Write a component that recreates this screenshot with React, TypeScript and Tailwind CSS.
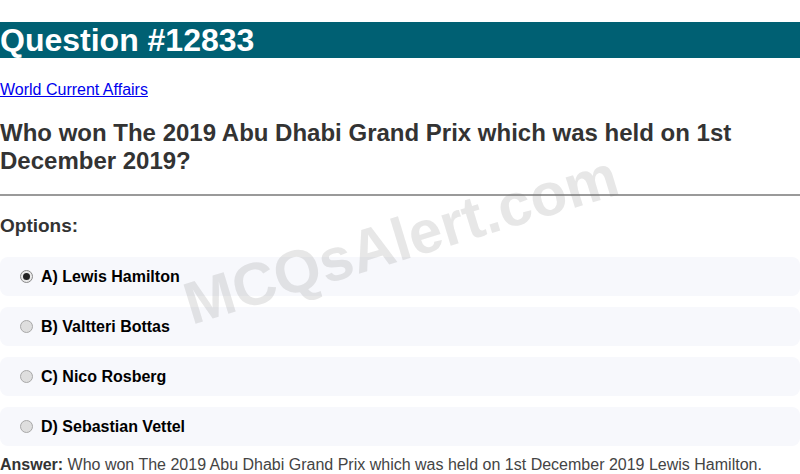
const options = [
  { label: 'A) Lewis Hamilton', checked: true },
  { label: 'B) Valtteri Bottas', checked: false },
  { label: 'C) Nico Rosberg', checked: false },
  { label: 'D) Sebastian Vettel', checked: false },
]

function Radio({ checked }: { checked: boolean }) {
  if (checked) {
    return (
      <span className="w-[13px] h-[13px] rounded-full border border-[#8a8a8a] bg-[#e9e9e9] flex items-center justify-center shrink-0">
        <span className="w-[7px] h-[7px] rounded-full bg-[#222]" />
      </span>
    )
  }
  return <span className="w-[13px] h-[13px] rounded-full border border-[#a8a8a8] bg-[#dedede] shrink-0" />
}

export default function App() {
  return (
    <div className="relative w-[800px] h-[474px] overflow-hidden bg-white font-['Liberation_Sans',Arial,sans-serif]">
      {/* Title band */}
      <h1 className="mt-[22px] h-[36px] bg-[#006073] text-white text-[32px] font-bold leading-[36px]">
        Question #12833
      </h1>

      <div className="mt-[23px] h-[18px] text-[16px] leading-[18px]">
        <a href="#" className="text-[#0000ee] underline">World Current Affairs</a>
      </div>

      <h2 className="mt-[20px] text-[24px] leading-[28px] font-bold text-[#333]">
        Who won The 2019 Abu Dhabi Grand Prix which was held on 1st December 2019?
      </h2>

      <hr className="mt-[19px] border-0 border-t-2 border-[#9a9a9a]" />

      <h3 className="mt-[19px] text-[19px] leading-[22px] font-bold text-[#333]">Options:</h3>

      {/* Options list */}
      <div className="mt-[20px] flex flex-col gap-[11px]">
        {options.map((o) => (
          <div
            key={o.label}
            className="h-[39px] rounded-lg bg-[#f7f8fc] flex items-center gap-[8px] pl-[20px]"
          >
            <Radio checked={o.checked} />
            <span className="text-[16px] font-bold text-black">{o.label}</span>
          </div>
        ))}
      </div>

      <p className="mt-[10px] text-[16px] leading-[18px] text-[#444]">
        <span className="font-bold text-[#333]">Answer:</span> Who won The 2019 Abu Dhabi Grand Prix which was held on 1st December 2019 Lewis Hamilton.
      </p>

      {/* Watermark */}
      <div className="pointer-events-none absolute left-[401px] top-[240px] -translate-x-1/2 -translate-y-1/2 -rotate-[17deg] whitespace-nowrap text-[60px] font-bold text-[rgba(120,120,120,0.18)]">
        MCQsAlert.com
      </div>
    </div>
  )
}
